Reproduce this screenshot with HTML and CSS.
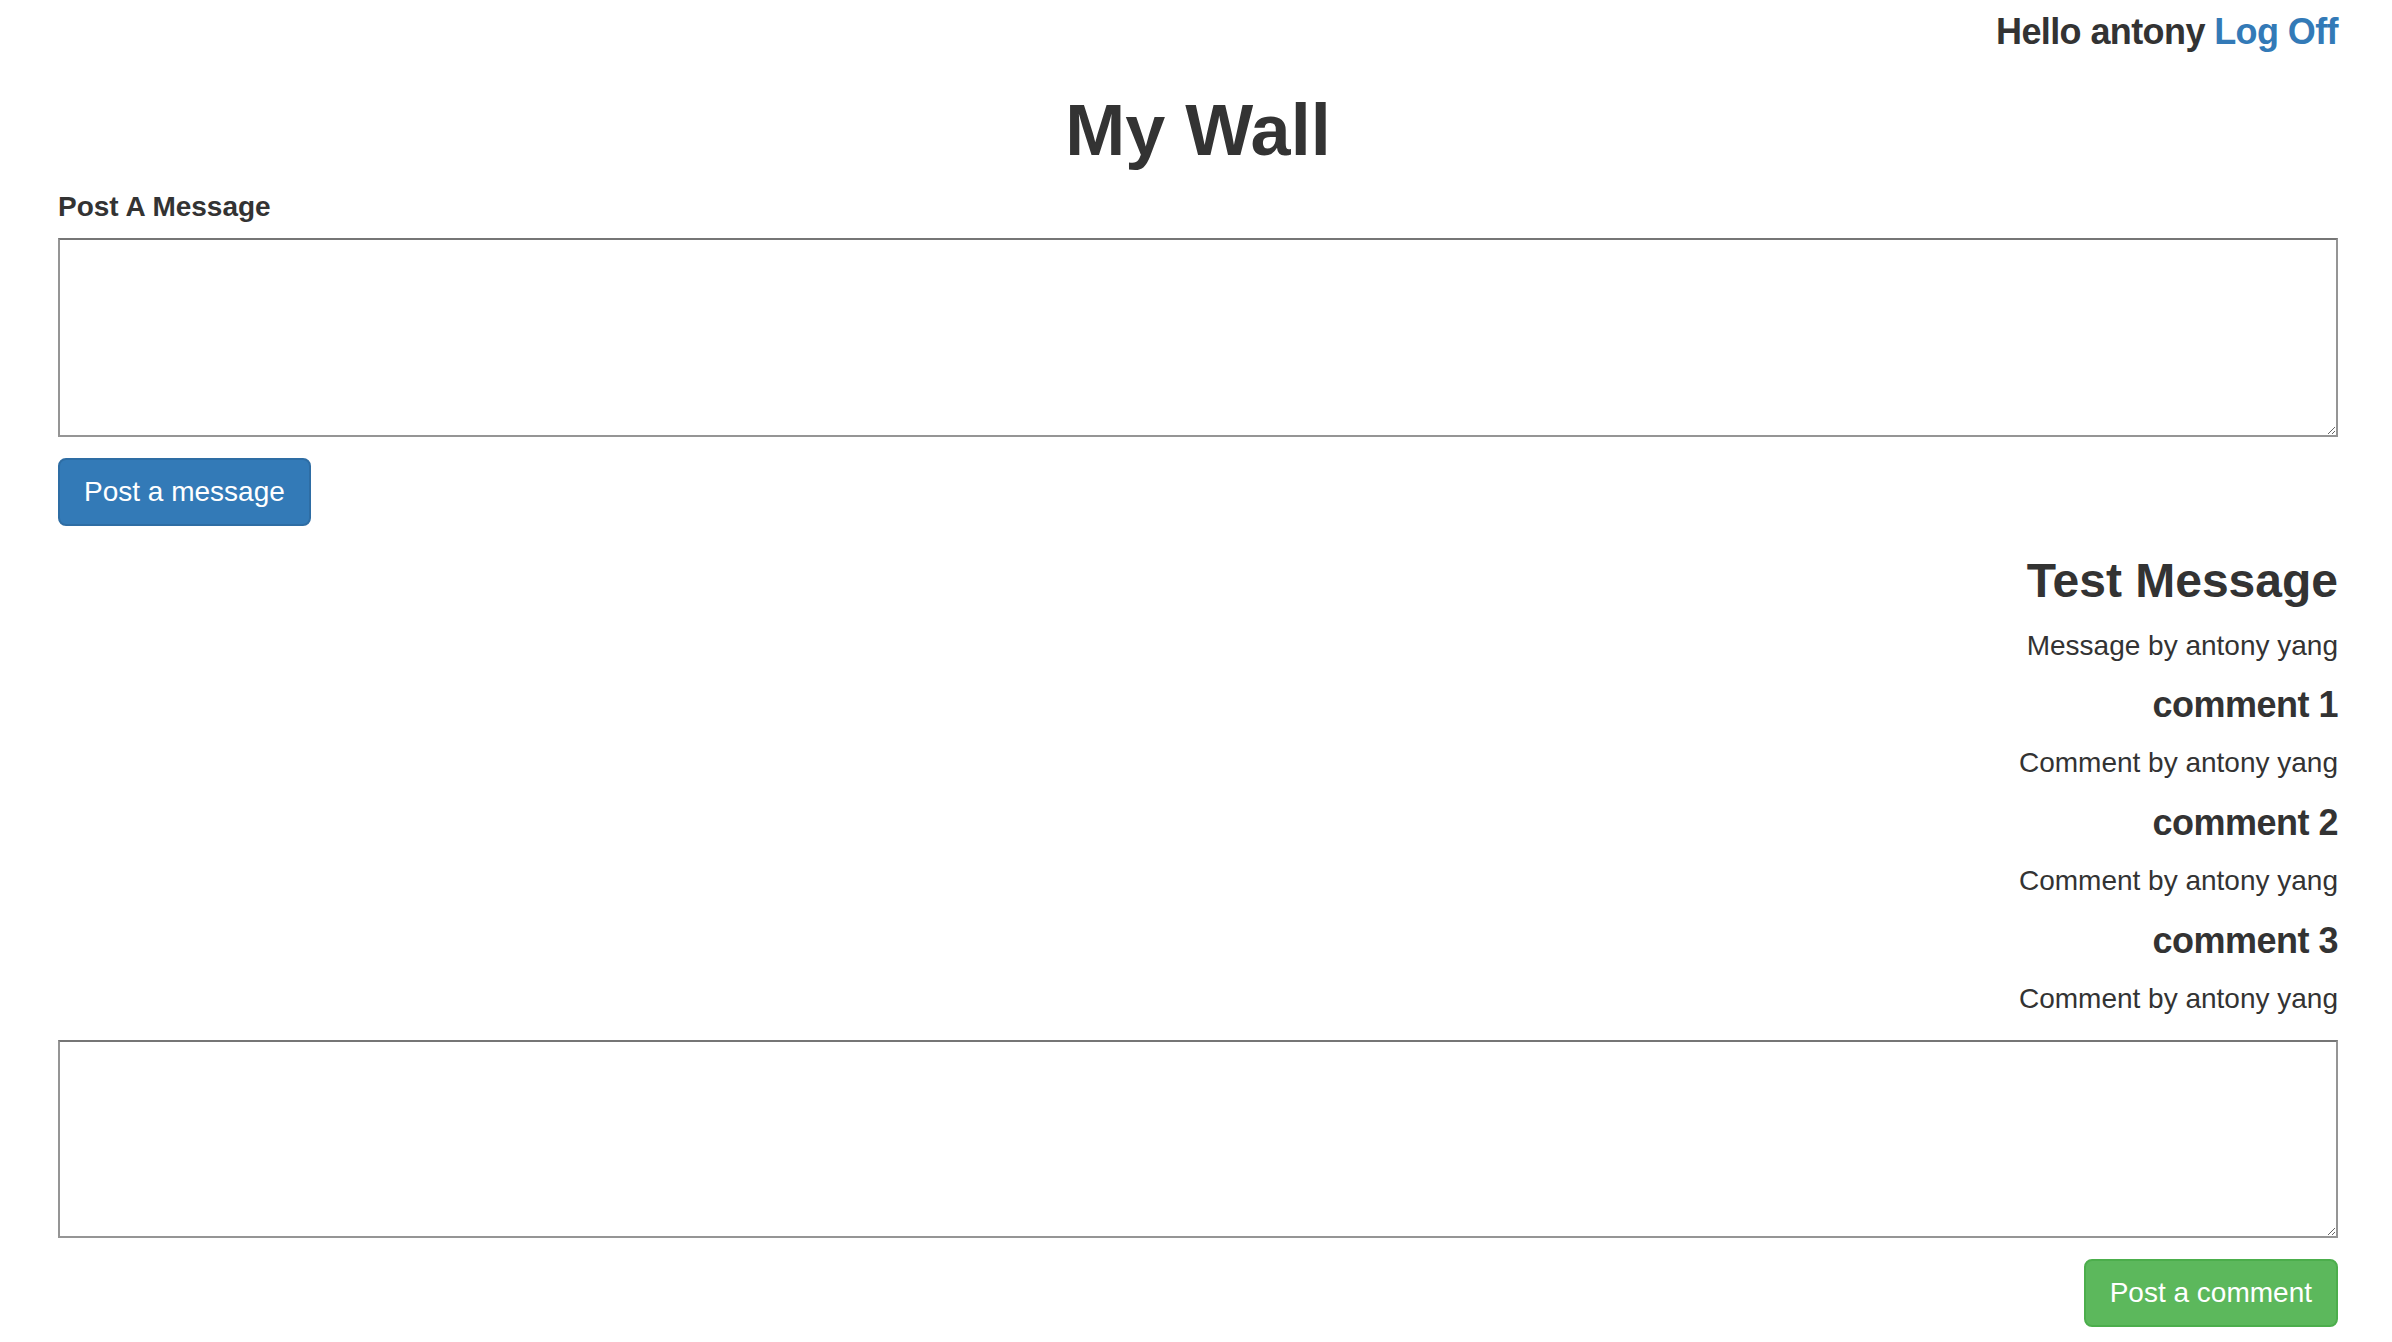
FILE: index.html
```html
<!DOCTYPE html>
<html lang="en">
<head>
<meta charset="utf-8">
<title>My Wall</title>
<link rel="stylesheet" href="styles.css">
</head>
<body>
<div class="page">
  <div class="topbar">Hello antony <a class="link" href="#">Log Off</a></div>
  <h1 class="title">My Wall</h1>
  <form class="post-form">
    <label class="label">Post A Message</label>
    <textarea class="box"></textarea>
    <button type="button" class="btn btn-primary">Post a message</button>
  </form>
  <div class="wall">
    <h3 class="msg-title">Test Message</h3>
    <p class="byline">Message by antony yang</p>
    <div class="comment">
      <h4 class="comment-title">comment 1</h4>
      <p class="comment-by">Comment by antony yang</p>
    </div>
    <div class="comment">
      <h4 class="comment-title">comment 2</h4>
      <p class="comment-by">Comment by antony yang</p>
    </div>
    <div class="comment">
      <h4 class="comment-title">comment 3</h4>
      <p class="comment-by">Comment by antony yang</p>
    </div>
    <form class="comment-form">
      <textarea class="box box-comment"></textarea>
      <button type="button" class="btn btn-success">Post a comment</button>
    </form>
  </div>
</div>
</body>
</html>
```
FILE: styles.css
```css
html, body {
  margin: 0;
  padding: 0;
  background: #fff;
}
body {
  font-family: "Liberation Sans", Arial, Helvetica, sans-serif;
  color: #333;
  font-size: 28px;
  line-height: 40px;
}
.page {
  display: flex;
  flex-direction: column;
  padding: 0 54px 0 58px;
}
.topbar {
  margin-top: 12px;
  font-size: 36px;
  line-height: 40px;
  font-weight: bold;
  letter-spacing: -0.6px;
  text-align: right;
}
.link {
  color: #337ab7;
  text-decoration: none;
}
.title {
  margin: 39px 0 0;
  font-size: 72px;
  line-height: 79px;
  font-weight: bold;
  letter-spacing: 0;
  text-align: center;
}
.post-form,
.comment-form {
  display: flex;
  flex-direction: column;
  margin: 0;
}
.label {
  margin-top: 17px;
  font-weight: bold;
  line-height: 40px;
}
.box {
  display: block;
  box-sizing: border-box;
  width: 100%;
  height: 199px;
  margin: 11px 0 0;
  padding: 2px 4px;
  border: 2px solid #959595;
  border-top-color: #767676;
  background: #fff;
  font: inherit;
}
.box-comment {
  margin-top: 21px;
  height: 198px;
}
.btn {
  box-sizing: border-box;
  margin-top: 21px;
  padding: 12px 24px;
  border: 2px solid transparent;
  border-radius: 8px;
  font-family: inherit;
  font-size: 28px;
  line-height: 40px;
  color: #fff;
  cursor: pointer;
}
.btn-primary {
  align-self: flex-start;
  background: #337ab7;
  border-color: #2e6da4;
}
.btn-success {
  align-self: flex-end;
  background: #5cb85c;
  border-color: #4cae4c;
}
.wall {
  display: flex;
  flex-direction: column;
  text-align: right;
}
.msg-title {
  margin: 29px 0 0;
  font-size: 48px;
  line-height: 52px;
  font-weight: bold;
  letter-spacing: 0;
}
.byline {
  margin: 19px 0 0;
}
.comment {
  display: flex;
  flex-direction: column;
}
.comment-title {
  margin: 19px 0 0;
  font-size: 36px;
  line-height: 40px;
  font-weight: bold;
  letter-spacing: -0.5px;
}
.comment + .comment .comment-title {
  margin-top: 20px;
}
.comment-by {
  margin: 18px 0 0;
}
```
